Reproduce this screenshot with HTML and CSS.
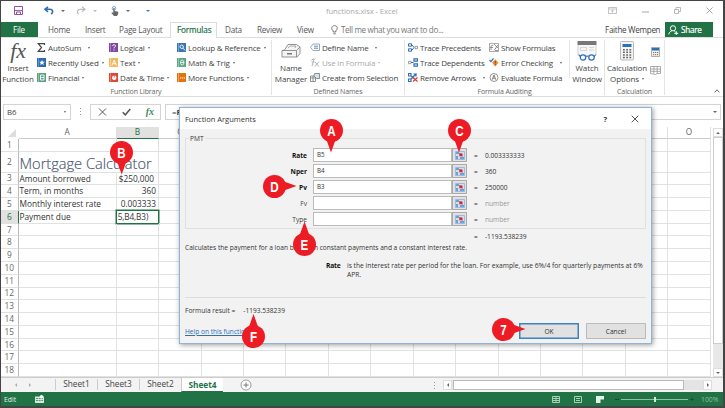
FILE: index.html
```html
<!DOCTYPE html>
<html lang="en">
<head>
    <meta charset="UTF-8">
    <title>functions.xlsx - Excel</title>
    <link rel="stylesheet" href="styles.css">
</head>
<body>
<div class="window">
    <header class="titlebar">
        <div class="quick">
            <svg width="9" height="9" viewBox="0 0 9 9"><path d="M.5.5h8v8h-8z" fill="#fff" stroke="#93529f"/><path d="M1 4.6h7M2.5 8.5V6h4v2.5" fill="none" stroke="#93529f"/></svg>
            <svg class="undo" width="10" height="9" viewBox="0 0 10 9"><path d="M4 .8 1 3.3l3 2.5M1.3 3.3H6c3 0 3.3 3 1.3 4.8" fill="none" stroke="#2f6eb5" stroke-width="1.6"/></svg>
            <i class="caret"></i>
            <svg class="redo" width="10" height="9" viewBox="0 0 10 9"><path d="M6 .8 9 3.3 6 5.8M8.7 3.3H4C1 3.3.7 6.3 2.7 8.1" fill="none" stroke="#bbb" stroke-width="1.2"/></svg>
            <i class="caret pale"></i>
            <svg class="touch" width="8" height="10" viewBox="0 0 8 10"><circle cx="3" cy="2.3" r="1.8" fill="none" stroke="#5c87b5" stroke-width=".7"/><path d="M2.3 2h1.3v3l3.6.8v2L6 10H3L.3 7l1-.8 1 .8z" fill="#666"/></svg>
            <i class="caret"></i>
            <i class="caret blue"></i>
        </div>
        <div class="title">functions.xlsx - Excel</div>
        <div class="controls">
            <svg width="9" height="7" viewBox="0 0 9 7"><path d="M.5.5h8v6h-8zM.5 2h8M4.5 5.7V3M3.2 4.2 4.5 3l1.3 1.2" fill="none" stroke="#b5b5b5" stroke-width=".8"/></svg>
            <svg width="7" height="7" viewBox="0 0 7 7"><path d="M0 5h7" stroke="#aaa"/></svg>
            <svg width="7" height="7" viewBox="0 0 7 7"><path d="M.5 2.5h4v4h-4zM2 2V.5h4.5v4H5" fill="none" stroke="#aaa" stroke-width=".8"/></svg>
            <svg width="7" height="7" viewBox="0 0 7 7"><path d="m.5.5 6 6m0-6-6 6" stroke="#999" stroke-width=".9"/></svg>
        </div>
    </header>

    <nav class="tabs">
        <span class="file">File</span>
        <span class="tab home">Home</span>
        <span class="tab ins">Insert</span>
        <span class="tab layout">Page Layout</span>
        <span class="tab active">Formulas</span>
        <span class="tab data">Data</span>
        <span class="tab review">Review</span>
        <span class="tab view">View</span>
        <span class="tell">
            <svg width="7" height="10" viewBox="0 0 7 10"><path d="M2.2 7V5.8C-.4 3.8.7.6 3.5.6s3.900 3.200 1.300 5.200V7zM2.300 8.800h2.400" fill="none" stroke="#666" stroke-width=".9"/></svg>
            Tell me what you want to do...
        </span>
        <span class="user">Faithe Wempen</span>
        <span class="share">
            <svg width="11" height="10" viewBox="0 0 11 10"><circle cx="5" cy="3.300" r="2.600" fill="none" stroke="#fff"/><path d="M.8 9.500c.3-2 1.500-3.300 3-3.600M6.200 5.900l1.500 1.300M6.300 8.300h4M8.300 6.300v3.500" fill="none" stroke="#fff"/></svg>
            Share
        </span>
    </nav>

    <section class="ribbon">
        <div class="group library">
            <div class="tools">
                <div class="big"><span class="fx-big">fx</span>Insert<br>Function</div>
                <div class="col">
                    <div class="cmd"><svg class="ic" viewBox="0 0 9 9"><path d="M7.500 2V.7H1.300L4.500 4.500 1.300 8.300h6.200V7" fill="none" stroke="#444" stroke-width="1.200"/></svg>AutoSum<i class="caret far"></i></div>
                    <div class="cmd"><svg class="ic" viewBox="0 0 9 9"><path d="M0 0h9v9H0z" fill="#2b6cb5"/><path d="M1.500 0v9" stroke="#8db4dd" stroke-width=".6"/><path d="m5 1.800.8 1.900 2 .1-1.500 1.300.5 2L5 6 3.200 7.100l.5-2-1.500-1.300 2-.1z" fill="#fff"/></svg>Recently Used<i class="caret"></i></div>
                    <div class="cmd"><svg class="ic" viewBox="0 0 9 9"><path d="M0 0h9v9H0z" fill="#5a9f80"/><path d="M1.500 0v9" stroke="#b9d8ca" stroke-width=".6"/><path d="M3.500 2h3.500v5H3.500zM3.500 4.500H7" fill="none" stroke="#fff" stroke-width=".9"/></svg>Financial<i class="caret"></i></div>
                </div>
                <div class="col logical">
                    <div class="cmd"><svg class="ic" viewBox="0 0 9 9"><path d="M0 0h9v9H0z" fill="#8247a0"/><path d="M1.500 0v9" stroke="#c8abd6" stroke-width=".6"/><path d="M3.500 3c.2-1.800 3.500-1.500 3 .2-.3.900-1.500 1-1.500 2.200M5 6.500v1" fill="none" stroke="#fff"/></svg>Logical<i class="caret"></i></div>
                    <div class="cmd"><svg class="ic" viewBox="0 0 9 9"><path d="M0 0h9v9H0z" fill="#f0b95f"/><path d="M1.500 0v9" stroke="#fae2bb" stroke-width=".6"/><path d="M3 7.500 5.200 2l2.200 5.500M3.800 5.700h2.800" fill="none" stroke="#fff" stroke-width=".9"/></svg>Text<i class="caret"></i></div>
                    <div class="cmd"><svg class="ic" viewBox="0 0 9 9"><path d="M0 0h9v9H0z" fill="#dc4a33"/><path d="M1.500 0v9" stroke="#f0aaa0" stroke-width=".6"/><circle cx="5.200" cy="4.800" r="2.200" fill="#fff"/><path d="M5.200 1.500v3.300" stroke="#dc4a33" stroke-width=".7"/></svg>Date &amp; Time<i class="caret"></i></div>
                </div>
                <div class="col lookup">
                    <div class="cmd"><svg class="ic" viewBox="0 0 9 9"><path d="M0 0h9v9H0z" fill="#3a76b3"/><path d="M1.500 0v9" stroke="#a0c0e0" stroke-width=".6"/><circle cx="4.700" cy="3.800" r="1.700" fill="none" stroke="#fff" stroke-width=".9"/><path d="m6 5.200 2 2.200" stroke="#fff"/></svg>Lookup &amp; Reference<i class="caret"></i></div>
                    <div class="cmd"><svg class="ic" viewBox="0 0 9 9"><path d="M0 0h9v9H0z" fill="#5fa588"/><path d="M1.500 0v9" stroke="#b9d8ca" stroke-width=".6"/><ellipse cx="5.200" cy="4.500" rx="1.700" ry="2.500" fill="none" stroke="#fff" stroke-width=".8"/><path d="M3.600 4.500h3.300" stroke="#fff" stroke-width=".8"/></svg>Math &amp; Trig<i class="caret"></i></div>
                    <div class="cmd"><svg class="ic" viewBox="0 0 9 9"><path d="M0 0h9v9H0z" fill="#e8710f"/><path d="M1.500 0v9" stroke="#f7c08f" stroke-width=".6"/><path d="M3 5h1.200M4.900 5h1.200M6.800 5H8" stroke="#fff" stroke-width="1.200"/></svg>More Functions<i class="caret"></i></div>
                </div>
            </div>
            <div class="caption">Function Library</div>
        </div>
        <div class="group names">
            <div class="tools">
                <div class="big">
                    <svg class="bigic" width="20" height="16" viewBox="0 0 20 16"><path d="M3.500 7 7 1.500h8.500L19 4v6.500L16 14H1V7.500zM1 7.500h14.500V14M15.500 7.500 19 4" fill="#f4f4f4" stroke="#888" stroke-width=".9"/><path d="M6 10h5v1.500H6z" fill="#777"/><path d="M7 5l2-2h6l-1 2" fill="none" stroke="#999" stroke-width=".8"/></svg>
                    Name<br>Manager
                </div>
                <div class="col">
                    <div class="cmd"><svg class="ic" viewBox="0 0 10 9"><path d="M3 1h6.500v6.500H3L.5 4.200z" fill="#fff" stroke="#8fa0b0" stroke-width=".9"/><path d="M4 3.200h4M4 5.200h4" stroke="#4b7fb7" stroke-width=".9"/></svg>Define Name<i class="caret far"></i></div>
                    <div class="cmd off"><svg class="ic" viewBox="0 0 10 9"><path d="M1 2.500C2 .5 4 2 5.500.7M4 1.500 2 8M1.500 4h3M5 4l4 4.500M9 3.500 5 8.500" fill="none" stroke="#aaa" stroke-width=".9"/></svg>Use in Formula<i class="caret pale"></i></div>
                    <div class="cmd"><svg class="ic" viewBox="0 0 10 9"><path d="M.5 3h5v5.500h-5zM.5 5h5M3 3v5.500" fill="#fff" stroke="#777" stroke-width=".8"/><path d="M4.500.5h5v5H6.500L4 3z" fill="#d5e2ef" stroke="#777" stroke-width=".8"/></svg>Create from Selection</div>
                </div>
            </div>
            <div class="caption">Defined Names</div>
        </div>
        <div class="group auditing">
            <div class="tools">
                <div class="col">
                    <div class="cmd"><svg class="ic" viewBox="0 0 10 9"><path d="M.5.8h3v2.400h-3zM.5 5.800h3v2.400h-3zM4 2l2 2.500L4 7" fill="none" stroke="#2f6fb5"/><path d="M7 3.300h2.500v2.400H7z" fill="none" stroke="#888" stroke-width=".8"/></svg>Trace Precedents</div>
                    <div class="cmd"><svg class="ic" viewBox="0 0 10 9"><path d="M.5 3.300H3v2.400H.5z" fill="none" stroke="#888" stroke-width=".8"/><path d="M3 4.500h2.500M6 .8h3.500v2.400H6zM6 5.800h3.500v2.400H6z" fill="none" stroke="#2f6fb5" stroke-width="1.200"/></svg>Trace Dependents</div>
                    <div class="cmd"><svg class="ic" viewBox="0 0 10 9"><path d="M.5.5H3V3H.5zM.5 6H3v2.500H.5zM3 3l3 2M3 6l5-5H5.500M8 1v2.500" fill="none" stroke="#2f6fb5" stroke-width="1.200"/><path d="m5 4.500 4.500 4m0-4L5 8.500" stroke="#e04030" stroke-width="1.300"/></svg>Remove Arrows<i class="caret far"></i></div>
                </div>
                <div class="col checks">
                    <div class="cmd"><svg class="ic" viewBox="0 0 10 9"><path d="M.5.5h9v8h-9z" fill="none" stroke="#888" stroke-width=".7"/><path d="M2 7V3.500C2 2 4 2 4 3M1 4.500h3M5 1l4 4M9 2 5 7.500M6 7.500h3" fill="none" stroke="#777" stroke-width=".8"/></svg>Show Formulas</div>
                    <div class="cmd"><svg class="ic" viewBox="0 0 10 9"><path d="m6.300 1.300 3.200 3.500L6.300 8.500 3 4.800z" fill="#ee8c3b"/><path d="M6.300 3v2.500M6.300 6.200v1" stroke="#a33b16"/><path d="M.5 2 2 3.500 4.500.3" fill="none" stroke="#2f6fb5" stroke-width="1.200"/></svg>Error Checking<i class="caret far"></i></div>
                    <div class="cmd"><svg class="ic" viewBox="0 0 10 9"><circle cx="5" cy="4.500" r="4" fill="none" stroke="#777" stroke-width=".8"/><path d="M3.200 6.800 5 2l1.800 4.800M3.800 5.200h2.400" fill="none" stroke="#666" stroke-width=".8"/></svg>Evaluate Formula</div>
                </div>
                <div class="big watch">
                    <svg class="bigic" width="20" height="20" viewBox="0 0 20 20"><path d="M1 .5h18v14H1z" fill="#f7f7f7" stroke="#c4c4c4" stroke-width=".8"/><path d="M.6 0h18.800v4H.6z" fill="#777"/><path d="M3.500 6.500h6v3h-6zM12 6.500h5M12 9h5" fill="none" stroke="#ccc" stroke-width=".8"/><circle cx="6" cy="16.500" r="2.700" fill="#fff" stroke="#2d70b5" stroke-width="1.200"/><circle cx="14.500" cy="16.500" r="2.700" fill="#fff" stroke="#2d70b5" stroke-width="1.200"/><path d="M8.700 16c.5-1 2.500-1 3 0M3.300 16 2 13.500M17.200 16l1.300-2.500" fill="none" stroke="#2d70b5"/></svg>
                    Watch<br>Window
                </div>
            </div>
            <div class="caption">Formula Auditing</div>
        </div>
        <div class="group calc">
            <div class="tools">
                <div class="big">
                    <svg class="bigic" width="14" height="20" viewBox="0 0 14 20"><rect x=".5" y=".5" width="13" height="18.500" rx="1" fill="#f5f5f5" stroke="#aaa" stroke-width=".8"/><path d="M2.500 3h9v3h-9z" fill="#2d70b5"/><path d="M3 8.700h8.500M3 11.300h8.500M3 13.900h8.500M3 16.500h8.500" stroke="#666" stroke-width="1.500" stroke-dasharray="1.800 1.400"/></svg>
                    Calculation<br>Options<i class="caret"></i>
                </div>
                <div class="minis">
                    <svg width="9" height="10" viewBox="0 0 9 10"><path d="M.5.5h8v9h-8z" fill="#eee" stroke="#999" stroke-width=".8"/><path d="M1 1h7v2.500H1z" fill="#2d70b5"/><path d="M2 5.500h5.500M2 7.700h5.500" stroke="#777" stroke-dasharray="1.200 .8"/></svg>
                    <svg width="11" height="9" viewBox="0 0 11 9"><path d="M.5.5h10v7H7L5.500 8.500.5 7.500zM.5 3h10M.5 5.300h10M3.800.5v7M7.200.5v7" fill="none" stroke="#999" stroke-width=".8"/></svg>
                </div>
            </div>
            <div class="caption">Calculation</div>
        </div>
        <svg class="collapse" width="6" height="4" viewBox="0 0 6 4"><path d="m.6 3.400 2.400-2.600 2.400 2.600" fill="none" stroke="#666"/></svg>
    </section>

    <div class="formula-bar">
        <div class="namebox">B6<i class="caret"></i></div>
        <div class="dots"></div>
        <div class="entry">
            <svg width="9" height="8" viewBox="0 0 9 8"><path d="m1 .5 7 7m0-7-7 7" stroke="#555"/></svg>
            <svg width="9" height="8" viewBox="0 0 9 8"><path d="m.7 4.300 2.600 2.500L8.300 1" fill="none" stroke="#555" stroke-width="1.500"/></svg>
            <span>fx</span>
        </div>
        <div class="formula">=<b>PMT(B5,B4,B3)</b><i class="caret"></i></div>
    </div>

    <main class="sheet-area">
        <div class="grid" id="grid"></div>
        <div class="vscroll">
            <div class="btn"><i class="tri up"></i></div>
            <div class="thumb"></div>
            <div class="btn"><i class="tri down"></i></div>
        </div>
    </main>

    <div class="sheets">
        <span class="nav"><i class="tri left"></i><i class="tri right"></i></span>
        <span class="sheet">Sheet1</span>
        <span class="sheet">Sheet3</span>
        <span class="sheet">Sheet2</span>
        <span class="sheet current">Sheet4</span>
        <svg class="add" width="12" height="12" viewBox="0 0 12 12"><circle cx="6" cy="6" r="5" fill="#fff" stroke="#888" stroke-width=".8"/><path d="M6 3.500v5M3.500 6h5" stroke="#777"/></svg>
        <div class="dots"></div>
        <div class="hscroll">
            <div class="btn"><i class="tri left"></i></div>
            <div class="thumb"></div>
            <div class="btn"><i class="tri right"></i></div>
        </div>
    </div>

    <footer class="status">
        <span>Edit</span>
        <svg class="macro" width="9" height="8" viewBox="0 0 9 8"><path d="M0 1.500h9V8H0z" fill="#d5e8dd"/><path d="M1 3.500h7M1 5.500h7" stroke="#217346" stroke-width=".7" stroke-dasharray="2 .7"/><circle cx="6.500" cy="1.800" r="1.800" fill="#fff"/></svg>
        <div class="views">
            <svg width="8" height="7" viewBox="0 0 8 7"><path d="M.5.500h7v6h-7zM.5 2.500h7M.5 4.500h7M4 .5v6" fill="none" stroke="#a9d0ba"/></svg>
            <svg width="8" height="7" viewBox="0 0 8 7"><path d="M.5.500h7v6h-7zM2 2.500h4M2 4.500h4" fill="none" stroke="#a9d0ba"/></svg>
            <svg width="8" height="7" viewBox="0 0 8 7"><path d="M0 0h8v7H0z" fill="#e3f1e9"/><path d="M4.500 3.500H8V7H4.500z" fill="#217346"/></svg>
        </div>
        <div class="zoom"><i class="minus"></i><span class="slider"><i class="knob"></i></span><b>+</b></div>
        <span class="percent">100%</span>
    </footer>
</div>

<div class="dialog">
    <div class="dialog-title">
        <span>Function Arguments</span>
        <b>?</b>
        <svg width="8" height="8" viewBox="0 0 8 8"><path d="m.7.7 6.600 6.600m0-6.600L.7 7.300" stroke="#555"/></svg>
    </div>
    <div class="args" id="args"><span class="legend">PMT</span></div>
    <div class="result"><i>=</i>-1193.538239</div>
    <p class="about">Calculates the payment for a loan based on constant payments and a constant interest rate.</p>
    <div class="hint"><b>Rate</b><span>is the interest rate per period for the loan. For example, use 6%/4 for quarterly payments at 6%<br>APR.</span></div>
    <div class="outcome"><span>Formula result =</span><span>-1193.538239</span></div>
    <div class="buttons">
        <a href="#">Help on this function</a>
        <button class="ok">OK</button>
        <button>Cancel</button>
    </div>
</div>

<div class="callout down a"><span>A</span></div>
<div class="callout down b"><span>B</span></div>
<div class="callout down c"><span>C</span></div>
<div class="callout right d"><span>D</span></div>
<div class="callout up e"><span>E</span></div>
<div class="callout up f"><span>F</span></div>
<div class="callout right seven"><span>7</span></div>

<script>
    var cells = {
        A2: 'Mortgage Calculator',
        A3: 'Amount borrowed', B3: '$250,000',
        A4: 'Term, in months', B4: '360',
        A5: 'Monthly interest rate', B5: '0.003333',
        A6: 'Payment due', B6: '5,B4,B3)'
    };
    var cols = 'ABCDEFGHIJKLMNO'.split('');
    var html = '<div class="corner"></div>';
    cols.forEach(function (c) {
        html += '<div class="colhead' + (c === 'B' ? ' on' : '') + '">' + c + '</div>';
    });
    for (var r = 1; r <= 18; r++) {
        html += '<div class="rowhead' + (r === 6 ? ' on' : '') + '">' + r + '</div>';
        cols.forEach(function (c) {
            var id = c + r;
            html += '<div class="cell ' + (c === 'B' ? 'num ' : '') + (cells[id] ? 'c' + id : '') + '">' + (cells[id] || '') + '</div>';
        });
    }
    document.getElementById('grid').innerHTML = html;

    var args = [
        ['Rate', 'B5', '0.003333333'],
        ['Nper', 'B4', '360'],
        ['Pv', 'B3', '250000'],
        ['Fv', '', 'number'],
        ['Type', '', 'number']
    ];
    var picker = '<svg width="10" height="9" viewBox="0 0 10 9"><path d="M.5.500h9v8h-9z" fill="#cfe0f2" stroke="#8fb0d4" stroke-width=".8"/><path d="M1 1h3v2H1zM1 5h2v3H1zM5 6h4v2H5z" fill="#6f9fd2"/><path d="m4 2.300 3.500.2v3.500L6.200 5 4.500 5.500z" fill="#d6262b"/></svg>';
    document.getElementById('args').innerHTML += args.map(function (a) {
        return '<div class="arg' + (a[1] ? '' : ' optional') + '"><label>' + a[0] + '</label><div class="field">' + a[1] +
            '</div><div class="pick">' + picker + '</div><i>=</i><span>' + a[2] + '</span></div>';
    }).join('');
</script>
</body>
</html>
```

FILE: styles.css
```css
* {
    box-sizing: border-box;
}

body {
    margin: 0;
    position: relative;
    width: 725px;
    height: 408px;
    overflow: hidden;
    background: #444;
    font-family: "Open Sans", "Noto Sans", sans-serif;
    font-size: 8px;
    color: #444;
    white-space: nowrap;
}

svg {
    display: block;
    flex: none;
}

i {
    font-style: normal;
}

.window {
    display: flex;
    flex-direction: column;
    width: 722px;
    height: 405px;
    margin: 1px 0 0 1px;
    background: #fff;
}

body::before {
    content: "";
    display: table;
}

.caret {
    display: inline-block;
    flex: none;
    border: 1.5px solid transparent;
    border-top: 2px solid #666;
    border-bottom: 0;
    margin-left: 3px;
    vertical-align: middle;
}

.caret.far { margin-left: 7px; }
.caret.pale { border-top-color: #bbb; }
.caret.blue { border-top-color: #3f7fc0; }

/* title bar and tabs */
.titlebar {
    display: flex;
    align-items: center;
    height: 21px;
    flex: none;
}

.quick {
    display: flex;
    align-items: center;
    width: 325px;
    padding: 0 0 2px 13px;
}

.quick .undo { margin-left: 21px; }
.quick .caret { margin-left: 7px; border-width: 2px 2px 0; }
.quick .redo { margin-left: 11px; }
.quick .touch { margin-left: 14px; }
.quick .caret.blue { margin-left: 16px; }

.title {
    color: #aaa;
    font-size: 7.7px;
    letter-spacing: -.1px;
    padding-bottom: 1px;
    flex: 1;
}

.controls {
    display: flex;
    align-items: center;
    gap: 25px;
    padding: 0 10px 2px 0;
}

.tabs {
    display: flex;
    height: 16px;
    flex: none;
    line-height: 15px;
    font-size: 8.1px;
    letter-spacing: -.22px;
    color: #555;
    border-bottom: 1px solid #ddd;
}

.file {
    width: 37px;
    padding-left: 12px;
    background: #217346;
    color: #fff;
}

.tab.home { width: 37px; padding-left: 10px; }
.tab.ins { width: 35px; padding-left: 10px; }
.tab.layout { width: 60px; padding-left: 9px; }

.tab.active {
    width: 47px;
    height: 16px;
    padding-left: 6px;
    border: 1px solid #ddd;
    border-width: 1px 1px 0;
    line-height: 13px;
    background: #fff;
    color: #217346;
    -webkit-text-stroke: .2px #217346;
    letter-spacing: -.1px;
}

.tab.data { width: 40px; padding-left: 8px; }
.tab.review { width: 40px; }
.tab.view { width: 34px; }

.tell {
    display: flex;
    align-items: center;
    gap: 3px;
    flex: 1;
    color: #777;
    letter-spacing: -.35px;
}

.user {
    width: 60px;
    color: #444;
    letter-spacing: -.3px;
}

.share {
    display: flex;
    align-items: center;
    gap: 2px;
    width: 48px;
    margin-right: 10px;
    padding-left: 3px;
    background: #217346;
    color: #fff;
    -webkit-text-stroke: .2px #fff;
}

/* ribbon */
.ribbon {
    display: flex;
    height: 59px;
    flex: none;
    border-bottom: 1px solid #ddd;
    letter-spacing: -.22px;
}

.group {
    display: flex;
    flex-direction: column;
    height: 55px;
    margin-top: 2px;
    border-right: 1px solid #e4e4e4;
}

.library { width: 271px; }
.names { width: 133px; }
.auditing { width: 200px; }
.calc { width: 60px; }

.tools {
    display: flex;
    height: 46px;
    flex: none;
}

.caption {
    font-size: 7px;
    line-height: 9px;
    padding-top: 1px;
    text-align: center;
    color: #666;
    letter-spacing: -.12px;
}

.big {
    width: 35px;
    text-align: center;
    line-height: 10.5px;
    padding-top: 1px;
    letter-spacing: -.1px;
}

.bigic {
    height: 20px;
    margin: 0 auto 2px;
}

.fx-big {
    display: block;
    height: 22px;
    font: italic 22px/20px "Liberation Serif", serif;
    color: #555;
}

.col .cmd {
    display: flex;
    align-items: center;
    height: 15px;
}

.ic {
    width: 9px;
    height: 9px;
    margin-right: 2px;
}

.library .col { width: 72px; }
.library .big { width: 34px; }
.library .col:nth-child(2) { margin-left: 2px; }
.library .col.logical { width: 68px; }
.library .cmd { letter-spacing: -.15px; }
.names .big { width: 38px; }
.names .ic, .auditing .ic { width: 10px; margin-right: 2px; }
.auditing .col { width: 81px; padding-left: 3px; }
.auditing .checks { padding-left: 3px; width: 83px; }
.watch { border-left: 1px solid #e4e4e4; height: 38px; }
.calc .big { width: 44px; }

.off { color: #aaa; }

.minis {
    display: flex;
    flex-direction: column;
    align-items: center;
    gap: 9px;
    padding: 7px 0 0 1px;
}

.collapse {
    margin: 51px 0 0 49px;
}

/* formula bar */
.formula-bar {
    display: flex;
    height: 30px;
    flex: none;
    padding: 7px 2px 7px;
    font-size: 7.8px;
}

.namebox, .entry, .formula {
    display: flex;
    align-items: center;
    height: 16px;
    border: 1px solid #d4d4d4;
    background: #fff;
}

.namebox {
    width: 68px;
    justify-content: space-between;
    padding: 0 4px 0 3px;
}

.dots {
    width: 1px;
    height: 8px;
    margin: 4px 9px 0;
    background: repeating-linear-gradient(#999 0 1px, transparent 1px 3px);
}

.entry {
    width: 71px;
    justify-content: space-between;
    padding: 0 6px 0 7px;
}

.entry span {
    font: italic bold 10px/14px "Liberation Serif", serif;
    color: #3f8a60;
}

.formula {
    flex: 1;
    margin-left: 4px;
    padding: 0 3px 0 6px;
}

.formula .caret { margin-left: auto; border-width: 2.5px 2.5px 0; }

/* worksheet */
.sheet-area {
    display: flex;
    height: 250px;
    flex: none;
    overflow: hidden;
}

.grid {
    display: grid;
    width: 710px;
    flex: none;
    grid-template-columns: 17.5px 98.2px 42.4px repeat(13, 42.45px);
    grid-template-rows: 11.5px 13px 21px repeat(16, 12.79px);
    align-content: start;
    line-height: 12.500px;
    font-size: 8.3px;
    color: #333;
}

.corner {
    border: 4px solid #ddd;
    border-left-color: transparent;
    border-top-color: transparent;
    width: 8px;
    height: 8px;
    margin: 2px 0 0 7px;
}

.colhead {
    display: flex;
    align-items: center;
    justify-content: center;
    border-right: 1px solid #e0e0e0;
    border-bottom: 1px solid #ccc;
    color: #666;
}

.colhead.on {
    background: #e1e1e1;
    border-bottom-color: #217346;
    color: #217346;
}

.rowhead {
    display: flex;
    align-items: center;
    justify-content: center;
    border-right: 1px solid #bbb;
    border-bottom: 1px solid #e0e0e0;
    color: #666;
    line-height: 10px;
}

.rowhead.on {
    background: #e1e1e1;
    border-right-color: #217346;
    color: #217346;
}

.cell {
    min-width: 0;
    padding-left: 1px;
    border-right: 1px solid #dfe1e2;
    border-bottom: 1px solid #dfe1e2;
}

.num {
    text-align: right;
    padding-right: 2px;
}

.cA2 {
    border-right-color: transparent;
    font-size: 14.6px;
    font-weight: 300;
    line-height: 22px;
    color: #44546a;
    -webkit-text-stroke: .15px #44546a;
}

.cB3 { padding-right: 4px; }

.cB6 {
    margin: -1px 0 0 -1px;
    border: 1px solid #217346;
    box-shadow: 0 0 0 .5px #217346;
    text-align: left;
    overflow: hidden;
    letter-spacing: -.15px;
}

.tri {
    border: 2px solid transparent;
    width: 0;
    height: 0;
}

.tri.up { border-bottom-color: #666; margin-top: -2px; }
.tri.down { border-top-color: #666; margin-top: 2px; }
.tri.left { border-right-color: #666; margin-left: -2px; }
.tri.right { border-left-color: #666; margin-right: -2px; }

.vscroll {
    display: flex;
    flex-direction: column;
    width: 10px;
    margin: 1px 0 0 2px;
    background: #e8e8e8;
}

.btn {
    display: flex;
    align-items: center;
    justify-content: center;
    width: 9px;
    height: 9px;
    border: 1px solid #ddd;
    background: #fff;
}

.vscroll .btn { width: 10px; }
.vscroll .thumb { height: 207px; border: 1px solid #ccc; background: #fff; margin-bottom: 24px; }

/* sheet tabs */
.sheets {
    display: flex;
    align-items: flex-start;
    height: 15px;
    flex: none;
    background: #f3f3f3;
    border-top: 1px solid #ccc;
    font-size: 8.300px;
    line-height: 12px;
}

.nav {
    display: flex;
    gap: 12px;
    width: 54px;
    padding: 5px 0 0 14px;
    opacity: .5;
}

.sheet {
    width: 42px;
    height: 11px;
    margin-top: 1px;
    line-height: 10px;
    text-align: center;
    border-left: 1px solid #ccc;
}

.sheet.current {
    height: 14px;
    line-height: 13px;
    margin-top: 0;
    background: #fff;
    border-bottom: 1px solid #217346;
    font-weight: bold;
    color: #217346;
}

.add {
    margin: 1px 0 0 17px;
}

.sheets .dots {
    margin: 4px 8px 0 auto;
}

.hscroll {
    display: flex;
    width: 269px;
    margin: 2px 11px 0 0;
    background: #e4e4e4;
}

.hscroll .btn { height: 10px; }

.hscroll .thumb {
    width: 231px;
    border: 1px solid #bbb;
    background: #fff;
    margin: 0 auto 0 1px;
}

/* status bar */
.status {
    display: flex;
    align-items: center;
    flex: 1;
    padding: 0 3px;
    background: #217346;
    color: #e3f1e9;
    font-size: 6.800px;
}

.macro { margin-left: 19px; }

.views {
    display: flex;
    gap: 14px;
    margin-left: auto;
}

.zoom {
    display: flex;
    align-items: center;
    width: 84px;
    margin-left: 11px;
    color: #0d4a29;
}

.minus { width: 4px; height: 1px; background: #0d4a29; }

.slider {
    width: 67px;
    height: 1px;
    margin: 0 2px;
    background: #8fbfa4;
    display: flex;
    justify-content: center;
    align-items: center;
}

.knob { width: 2px; height: 5px; background: #d5e8dd; }

.percent {
    width: 19px;
    margin-left: 2px;
    color: #8fbfa4;
}

/* dialog */
.dialog {
    position: absolute;
    left: 179px;
    top: 107px;
    width: 473px;
    height: 237px;
    border: 1px solid #8fb4d6;
    background: #f2f2f2;
    box-shadow: 1px 1px 5px rgba(0, 0, 0, .4);
    font-size: 6.600px;
    color: #333;
}

.dialog-title {
    display: flex;
    align-items: center;
    height: 21px;
    padding: 0 12px 0 5px;
    background: #fff;
    font-size: 7.5px;
}

.dialog-title b {
    margin-left: auto;
    margin-right: 24px;
}

.args {
    display: flex;
    flex-direction: column;
    height: 91px;
    margin: 9px 5px 0;
    padding-top: 8px;
    border: 1px solid #e0e0e0;
}

.legend {
    align-self: flex-start;
    height: 10px;
    margin: -13px 0 3px 3px;
    padding: 0 1px;
    background: #f2f2f2;
    line-height: 9px;
}

.arg {
    display: flex;
    align-items: center;
    height: 16px;
}

.arg label {
    width: 121px;
    margin-right: 6px;
    text-align: right;
    font-weight: bold;
    color: #111;
}

.optional label { font-weight: normal; color: #444; }
.optional span { color: #999; }

.field {
    width: 139px;
    height: 14px;
    padding-left: 3px;
    border: 1px solid #bbb;
    background: #fff;
    font-size: 6.2px;
    line-height: 12px;
}

.pick {
    display: flex;
    align-items: center;
    justify-content: center;
    width: 15px;
    height: 14px;
    border: 1px solid #aaa;
    background: #e1e1e1;
}

.arg i, .result i {
    width: 18px;
    padding-left: 7px;
}

.result {
    display: flex;
    margin-left: 287px;
    height: 14px;
    line-height: 16px;
}

.about {
    margin: 0 0 0 5px;
    line-height: 10px;
}

.hint {
    display: flex;
    height: 37px;
    margin: 8px 5px 0;
    padding-left: 141px;
    border-bottom: 1px solid #ddd;
    line-height: 9px;
    font-size: 6.700px;
}

.hint b { width: 21px; color: #111; letter-spacing: -.2px; }

.outcome {
    display: flex;
    gap: 8px;
    height: 25px;
    margin-left: 5px;
    line-height: 25px;
}

.buttons {
    display: flex;
    align-items: center;
    height: 16px;
    padding: 0 5px;
}

.buttons a {
    margin-right: auto;
    color: #2f6fb5;
}

.buttons button {
    width: 60px;
    height: 16px;
    margin-left: 7px;
    padding: 0;
    border: 1px solid #bbb;
    background: #e1e1e1;
    font: inherit;
    color: #333;
}

.buttons .ok { border: 1px solid #3c82c4; box-shadow: inset 0 0 0 .5px #3c82c4; }

/* callouts: positioned by the centre of the disc */
.callout {
    position: absolute;
    width: 23px;
    height: 23px;
    margin: -11.500px 0 0 -11.500px;
    border-radius: 50%;
    background: #ed1c24;
    color: #fff;
    font: bold 15.500px/23px "Liberation Sans", sans-serif;
    text-align: center;
}

.callout span {
    position: relative;
    display: block;
    transform: scaleX(.75);
}

.callout::before {
    content: "";
    position: absolute;
    left: 6.500px;
    top: 20px;
    width: 10px;
    height: 14px;
    background: #ed1c24;
    clip-path: polygon(0 0, 100% 0, 50% 100%);
}

.callout.up::before { top: -11px; clip-path: polygon(50% 0, 100% 100%, 0 100%); }
.callout.right::before { left: 20px; top: 6.500px; width: 14px; height: 10px; clip-path: polygon(0 0, 100% 50%, 0 100%); }

.a { left: 331px; top: 130px; }
.b { left: 121.700px; top: 152px; }
.c { left: 459px; top: 130px; }
.d { left: 274px; top: 186px; }
.e { left: 304.500px; top: 244px; }
.f { left: 253.500px; top: 336.500px; }
.seven { left: 503px; top: 329px; }
```
